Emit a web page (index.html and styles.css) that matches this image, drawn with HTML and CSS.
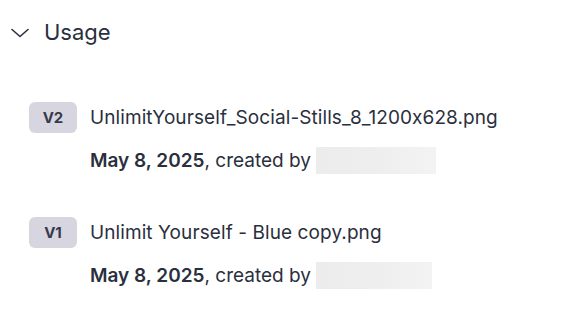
FILE: index.html
```html
<!DOCTYPE html>
<html>
<head>
<meta charset="utf-8">
<link rel="stylesheet" href="styles.css">
</head>
<body>
<section class="usage">
  <div class="header">
    <svg class="chevron" width="18" height="10" viewBox="0 0 18 10"><path d="M1 1.5 L9 8.5 L17 1.5" fill="none" stroke="#2b3040" stroke-width="1.6" stroke-linecap="round" stroke-linejoin="round"/></svg>
    <span class="title">Usage</span>
  </div>
  <ul class="list">
    <li class="item">
      <span class="badge">V2</span>
      <div class="info">
        <div class="name">UnlimitYourself_Social-Stills_8_1200x628.png</div>
        <div class="meta"><strong>May 8, 2025</strong>, created by <span class="redacted r1"></span></div>
      </div>
    </li>
    <li class="item">
      <span class="badge">V1</span>
      <div class="info">
        <div class="name">Unlimit Yourself - Blue copy.png</div>
        <div class="meta"><strong>May 8, 2025</strong>, created by <span class="redacted r2"></span></div>
      </div>
    </li>
  </ul>
</section>
</body>
</html>
```
FILE: styles.css
```css
html, body {
  margin: 0;
  background: #ffffff;
}
body {
  font-family: Inter, "Noto Sans", sans-serif;
  font-feature-settings: "calt" 0;
  color: #2a2f3e;
}
.usage {
  padding: 18px 0 0 11px;
}
.header {
  display: flex;
  align-items: center;
  gap: 15px;
  height: 28px;
}
.chevron {
  display: block;
  margin-top: 1px;
}
.title {
  font-size: 22px;
  font-weight: 400;
}
.list {
  list-style: none;
  margin: 0;
  padding: 56px 0 0 18px;
  display: flex;
  flex-direction: column;
  gap: 43px;
}
.item {
  display: flex;
  align-items: flex-start;
  gap: 13px;
}
.badge {
  width: 48px;
  height: 31px;
  border-radius: 6px;
  background: #d7d6e0;
  color: #363a4a;
  font-size: 15px;
  font-weight: 700;
  display: flex;
  align-items: center;
  justify-content: center;
  flex: none;
}
.info {
  display: flex;
  flex-direction: column;
  gap: 14px;
}
.name {
  font-size: 19px;
  line-height: 31px;
  letter-spacing: 0.09px;
}
.meta {
  font-size: 19px;
  line-height: 27px;
  display: flex;
  align-items: center;
  white-space: pre;
}
.meta strong {
  font-weight: 600;
}
.redacted {
  display: inline-block;
  height: 27px;
  background: linear-gradient(90deg, #ececec, #eeeeee 50%, #f3f3f3);
}
.r1 { width: 120px; }
.r2 { width: 116px; }
```
